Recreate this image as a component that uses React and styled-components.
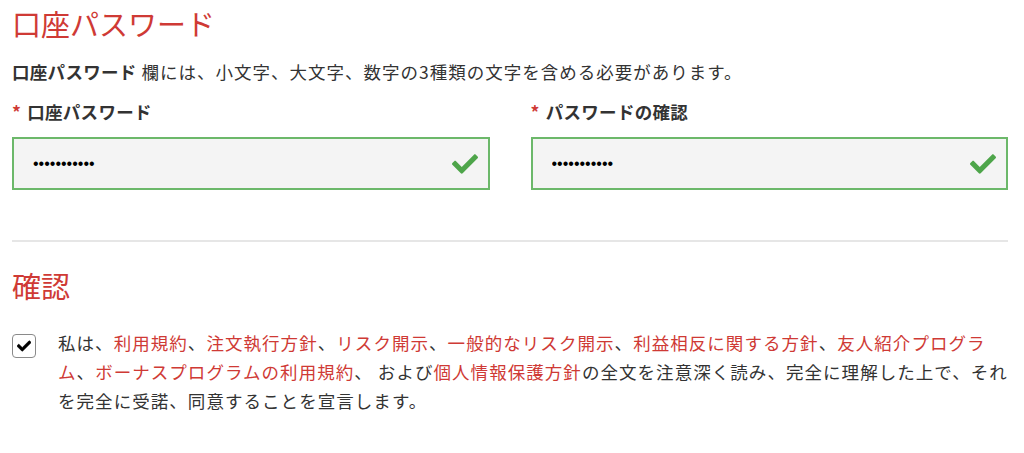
import React from "react";
import styled, { createGlobalStyle } from "styled-components";
import { FaCheck } from "react-icons/fa";

const red = "#cf3a35";
const text = "#333333";

const Global = createGlobalStyle`
  body{ margin:0; background:#fff; font-family:"Noto Sans CJK JP","Noto Sans",sans-serif; color:${text}; }
  *{ box-sizing:border-box; }
`;

const Page = styled.main`
  padding: 6px 16px 0 12px;
`;

const Heading = styled.h2`
  margin:0; font-size:29px; line-height:35px; font-weight:400; color:${red};
`;

const Note = styled.p`
  margin:17px 0 0; font-size:17.5px; line-height:27px; letter-spacing:1px;
  strong{ font-weight:700; letter-spacing:0.3px; }
`;

const Fields = styled.div`
  display:grid; grid-template-columns:1fr 1fr; gap:41px; margin-top:13px;
`;

const Field = styled.div`
  display:flex; flex-direction:column; gap:12px;
`;

const Label = styled.label`
  font-size:17.5px; line-height:27px; font-weight:700; letter-spacing:0.3px;
  span{ color:${red}; margin-right:6px; }
`;

const InputBox = styled.div`
  height:53px; border:2px solid #6cb86a; background:#f4f4f4;
  display:flex; align-items:center; padding:0 10px 0 19px;
  input{ flex:1; min-width:0; border:0; background:transparent; outline:none; font-family:"Liberation Sans",sans-serif; font-size:16px; color:#000; padding:0; }
  svg{ color:#4ea54a; flex-shrink:0; }
`;

const Divider = styled.hr`
  margin:50px 0 0; border:0; border-top:2px solid #e6e6e6;
`;

const Section = styled(Heading)`
  margin-top:26px;
`;

const Agree = styled.div`
  display:flex; gap:22px; margin-top:25px; align-items:flex-start;
`;

const Box = styled.span`
  width:24px; height:24px; flex-shrink:0; margin-top:6px; border:1.5px solid #8a8a8a; border-radius:4px;
  display:flex; align-items:center; justify-content:center; color:#000; background:#fff;
  svg{ stroke:#000; stroke-width:20px; }
`;

const AgreeText = styled.p`
  margin:0; font-size:17.5px; line-height:29px; letter-spacing:1.05px;
  a{ color:${red}; text-decoration:none; }
`;

function PasswordField({ label, id }) {
  return (
    <Field>
      <Label htmlFor={id}><span>*</span>{label}</Label>
      <InputBox>
        <input id={id} type="password" value="12345678901" readOnly />
        <FaCheck size={26} />
      </InputBox>
    </Field>
  );
}

export default function App() {
  const links = ["利用規約", "注文執行方針", "リスク開示", "一般的なリスク開示", "利益相反に関する方針", "友人紹介プログラム", "ボーナスプログラムの利用規約"];
  return (
    <Page>
      <Global />
      <Heading>口座パスワード</Heading>
      <Note><strong>口座パスワード</strong> 欄には、小文字、大文字、数字の3種類の文字を含める必要があります。</Note>
      <Fields>
        <PasswordField id="pw" label="口座パスワード" />
        <PasswordField id="pw2" label="パスワードの確認" />
      </Fields>
      <Divider />
      <Section>確認</Section>
      <Agree>
        <Box><FaCheck size={14} /></Box>
        <AgreeText>
          私は、{links.map((l, i) => (
            <React.Fragment key={l}><a href="#">{l}</a>{i < links.length - 1 ? "、" : "、 "}</React.Fragment>
          ))}および<a href="#">個人情報保護方針</a>の全文を注意深く読み、完全に理解した上で、それを完全に受諾、同意することを宣言します。
        </AgreeText>
      </Agree>
    </Page>
  );
}
